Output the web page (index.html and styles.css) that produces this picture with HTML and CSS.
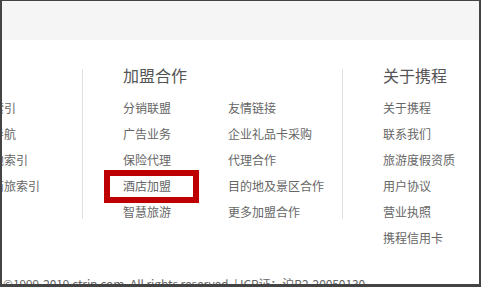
FILE: index.html
```html
<!DOCTYPE html>
<html lang="zh">
<head>
<meta charset="utf-8">
<link rel="stylesheet" href="styles.css">
</head>
<body>
<div class="frame">
  <div class="topbar"></div>
  <div class="links">
    <div class="col col-first">
      <div class="heading"></div>
      <ul class="list">
        <li>酒店索引</li>
        <li>网站导航</li>
        <li>目的地索引</li>
        <li>热门商旅索引</li>
      </ul>
    </div>
    <div class="divider"></div>
    <div class="col col-mid">
      <div class="heading">加盟合作</div>
      <div class="sub">
        <ul class="list list-a">
          <li>分销联盟</li>
          <li>广告业务</li>
          <li>保险代理</li>
          <li>酒店加盟</li>
          <li>智慧旅游</li>
        </ul>
        <ul class="list">
          <li>友情链接</li>
          <li>企业礼品卡采购</li>
          <li>代理合作</li>
          <li>目的地及景区合作</li>
          <li>更多加盟合作</li>
        </ul>
      </div>
    </div>
    <div class="divider"></div>
    <div class="col col-last">
      <div class="heading">关于携程</div>
      <ul class="list">
        <li>关于携程</li>
        <li>联系我们</li>
        <li>旅游度假资质</li>
        <li>用户协议</li>
        <li>营业执照</li>
        <li>携程信用卡</li>
      </ul>
    </div>
  </div>
  <div class="copyright">©1999-2019 ctrip.com. All rights reserved. | ICP证：沪B2-20050130</div>
</div>
<div class="highlight"></div>
</body>
</html>
```
FILE: styles.css
```css
html, body {
  margin: 0;
  padding: 0;
  background: #ffffff;
}
body {
  position: relative;
  width: 481px;
  height: 287px;
  overflow: hidden;
  font-family: "Noto Sans CJK SC", "Liberation Sans", sans-serif;
  color: #666666;
}
.frame {
  box-sizing: border-box;
  width: 481px;
  height: 287px;
  border-style: solid;
  border-color: #444444;
  border-width: 1px 2px 3px 2px;
  overflow: hidden;
  background: #ffffff;
}
.topbar {
  height: 39px;
  background: #f5f5f5;
}
.links {
  display: flex;
  align-items: flex-start;
  margin-top: 27px;
}
.col {
  flex: none;
}
.col-first {
  margin-left: -34px;
  width: 114px;
}
.col-mid {
  width: 219px;
  padding-left: 40px;
}
.col-last {
  padding-left: 40px;
}
.divider {
  flex: none;
  width: 1px;
  height: 150px;
  margin-top: 2px;
  background: #e0e0e0;
}
.heading {
  height: 16px;
  font-size: 16px;
  line-height: 16px;
  color: #555555;
  white-space: nowrap;
  margin-bottom: 12px;
}
.list {
  list-style: none;
  margin: 0;
  padding: 0;
}
.list li {
  font-size: 12px;
  line-height: 26px;
  height: 26px;
  white-space: nowrap;
}
.sub {
  display: flex;
}
.list-a {
  width: 105px;
}
.copyright {
  margin-top: 23px;
  padding-left: 1px;
  font-size: 12px;
  line-height: 20px;
  letter-spacing: -0.1px;
  white-space: nowrap;
  color: #666666;
}
.highlight {
  position: absolute;
  left: 104px;
  top: 170px;
  width: 95px;
  height: 33px;
  box-sizing: border-box;
  border: 6px solid #bf0000;
}
```
